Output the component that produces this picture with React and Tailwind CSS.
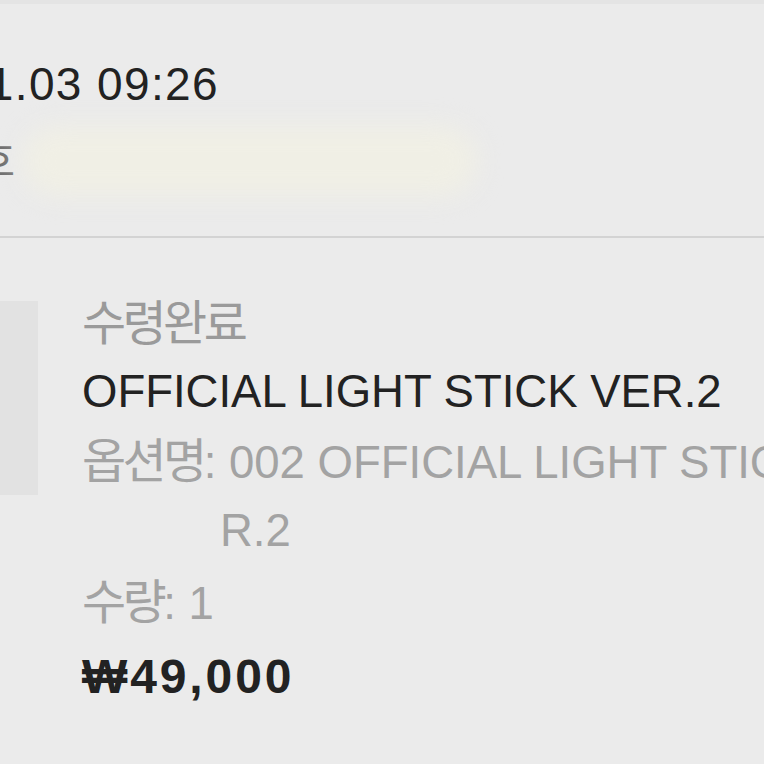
export default function App() {
  const ko = 'text-[48px] tracking-[-0.075em]'

  return (
    <div
      className="w-[764px] h-[764px] overflow-hidden bg-[#ebebeb] border-t-4 border-[#e4e4e4]"
      style={{ fontFamily: '"Liberation Sans", "Noto Sans CJK KR", sans-serif' }}
    >
      {/* 주문 정보 */}
      <div className="pt-[57px]">
        <div className="flex justify-end w-[219px] whitespace-nowrap text-[46px] leading-[46px] tracking-[0.03em] text-[#222]">
          <span>2023.11.03 09:26</span>
        </div>
        <div className="flex items-center h-[80px] mt-[14px]">
          <div className="flex justify-end w-[12px] flex-none whitespace-nowrap text-[42px] text-[#6f6f6f]">
            <span className="tracking-[-0.075em]">주문번호</span>
          </div>
          <div className="ml-[10px] w-[455px] h-[70px] rounded-full bg-[#f0efe5] blur-[12px]" />
        </div>
      </div>

      <div className="mt-[35px] h-[2px] bg-[#d3d3d3]" />

      {/* 상품 */}
      <div className="flex items-start gap-[44px] pt-[51px]">
        <div className="w-[38px] h-[194px] mt-[12px] flex-none bg-[#e2e2e2]" />
        <div className="flex flex-col text-[45.5px] leading-[70px] whitespace-nowrap">
          <p className={`text-[#9a9a9a] ${ko}`}>수령완료</p>
          <p className="text-[#222] -mt-[2px]">OFFICIAL LIGHT STICK VER.2</p>
          <p className="text-[#a3a3a3]">
            <span className={ko}>옵션명</span>: 002 OFFICIAL LIGHT STICK VE
          </p>
          <p className="text-[#a3a3a3] pl-[138px] -mt-[2px]">R.2</p>
          <p className="text-[#a3a3a3] mt-[2px]">
            <span className={ko}>수량</span>: 1
          </p>
          <p className="text-[#222] font-bold text-[48px] tracking-[0.06em] mt-[3px]">₩49,000</p>
        </div>
      </div>
    </div>
  )
}
